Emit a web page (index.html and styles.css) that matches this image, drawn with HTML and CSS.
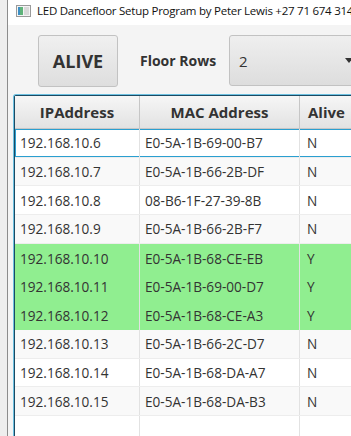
FILE: index.html
```html
<!DOCTYPE html>
<html lang="en">
<head>
    <meta charset="UTF-8">
    <meta name="viewport" content="width=device-width, initial-scale=1.0">
    <title>LED Dancefloor Setup Program</title>
    <link rel="stylesheet" href="styles.css">
</head>
<body>
    <div class="frame">
        <div class="titlebar">
            <svg class="app-icon" width="15" height="12" viewBox="0 0 15 12">
                <rect x="0.5" y="0.5" width="14" height="11" fill="#f4f4f4" stroke="#9a9a9a"/>
                <rect x="2" y="2" width="5" height="8" fill="#3c8fc4"/>
                <rect x="4" y="2" width="3" height="8" fill="#5fb37a"/>
                <rect x="8" y="2" width="5" height="8" fill="#d9d9d9"/>
            </svg>
            <span class="title">LED Dancefloor Setup Program by Peter Lewis +27 71 674 3147</span>
        </div>

        <div class="content">
            <div class="toolbar">
                <button class="btn-alive">ALIVE</button>
                <span class="label">Floor Rows</span>
                <div class="combo">
                    <span class="combo-value">2</span>
                    <span class="combo-arrow"></span>
                </div>
            </div>

            <div class="table">
                <div class="row head">
                    <div class="cell">IPAddress</div>
                    <div class="cell">MAC Address</div>
                    <div class="cell">Alive</div>
                </div>
                <div class="row focused">
                    <div class="cell">192.168.10.6</div>
                    <div class="cell">E0-5A-1B-69-00-B7</div>
                    <div class="cell">N</div>
                </div>
                <div class="row odd">
                    <div class="cell">192.168.10.7</div>
                    <div class="cell">E0-5A-1B-66-2B-DF</div>
                    <div class="cell">N</div>
                </div>
                <div class="row">
                    <div class="cell">192.168.10.8</div>
                    <div class="cell">08-B6-1F-27-39-8B</div>
                    <div class="cell">N</div>
                </div>
                <div class="row odd">
                    <div class="cell">192.168.10.9</div>
                    <div class="cell">E0-5A-1B-66-2B-F7</div>
                    <div class="cell">N</div>
                </div>
                <div class="row alive">
                    <div class="cell">192.168.10.10</div>
                    <div class="cell">E0-5A-1B-68-CE-EB</div>
                    <div class="cell">Y</div>
                </div>
                <div class="row alive">
                    <div class="cell">192.168.10.11</div>
                    <div class="cell">E0-5A-1B-69-00-D7</div>
                    <div class="cell">Y</div>
                </div>
                <div class="row alive">
                    <div class="cell">192.168.10.12</div>
                    <div class="cell">E0-5A-1B-68-CE-A3</div>
                    <div class="cell">Y</div>
                </div>
                <div class="row odd">
                    <div class="cell">192.168.10.13</div>
                    <div class="cell">E0-5A-1B-66-2C-D7</div>
                    <div class="cell">N</div>
                </div>
                <div class="row">
                    <div class="cell">192.168.10.14</div>
                    <div class="cell">E0-5A-1B-68-DA-A7</div>
                    <div class="cell">N</div>
                </div>
                <div class="row odd">
                    <div class="cell">192.168.10.15</div>
                    <div class="cell">E0-5A-1B-68-DA-B3</div>
                    <div class="cell">N</div>
                </div>
                <div class="row">
                    <div class="cell"></div>
                    <div class="cell"></div>
                    <div class="cell"></div>
                </div>
            </div>
        </div>
    </div>
</body>
</html>
```

FILE: styles.css
```css
html, body {
    margin: 0;
    padding: 0;
    overflow: hidden;
}
body {
    font-family: "Open Sans", "Noto Sans", sans-serif;
    background-color: #eeeeee;
    color: #333;
    width: 351px;
    height: 436px;
}
.frame {
    margin-left: 7px;
    border-left: 1px solid #8c8c8c;
    height: 436px;
    width: 420px;
}
.titlebar {
    height: 25px;
    background-color: white;
    display: flex;
    align-items: center;
    padding-left: 8px;
    box-sizing: border-box;
}
.app-icon {
    display: block;
    margin-top: -3px;
}
.title {
    font-size: 11.5px;
    color: #111;
    margin-left: 6px;
    margin-top: -4px;
    white-space: nowrap;
    letter-spacing: -0.25px;
}
.content {
    background-color: #f4f4f4;
    height: 411px;
    padding-top: 10px;
    box-sizing: border-box;
}
.toolbar {
    display: flex;
    align-items: flex-start;
    padding-left: 30px;
    height: 52px;
}
.btn-alive {
    width: 80px;
    height: 52px;
    font-family: inherit;
    font-size: 18px;
    font-weight: bold;
    color: #333;
    background: linear-gradient(#f0f0f0, #dedede);
    border: 1px solid #c2c2c2;
    border-radius: 3px;
    padding: 0;
}
.label {
    font-size: 14px;
    font-weight: bold;
    line-height: 52px;
    margin-left: 22px;
    width: 89px;
    white-space: nowrap;
}
.combo {
    width: 140px;
    height: 51px;
    box-sizing: border-box;
    background: linear-gradient(#efefef, #dddddd);
    border: 1px solid #c2c2c2;
    border-radius: 3px;
    display: flex;
    align-items: center;
    padding-left: 9px;
}
.combo-value {
    font-size: 15px;
}
.combo-arrow {
    margin-left: auto;
    margin-right: 15px;
    width: 0;
    height: 0;
    border-left: 4px solid transparent;
    border-right: 4px solid transparent;
    border-top: 5px solid #333;
}
.table {
    margin-top: 8px;
    margin-left: 6px;
    width: 400px;
    border: 1px solid #1c4a62;
    border-radius: 2px 0 0 0;
    box-shadow: 0 0 0 1px #6cc0e0;
    background-color: white;
}
.row {
    display: grid;
    grid-template-columns: 125px 160px 115px;
    height: 28.7px;
    box-sizing: border-box;
    background-color: white;
    border-bottom: 1px solid #ededed;
    font-size: 13.6px;
}
.row.odd {
    background-color: #f9f9f9;
}
.row.alive {
    background-color: #90ee90;
    border-bottom: none;
}
.row.focused {
    box-shadow: inset 0 0 0 1px #2a9fd0;
}
.cell {
    border-right: 1px solid #e2e2e2;
    padding-left: 5px;
    display: flex;
    align-items: center;
    white-space: nowrap;
}
.cell:last-child {
    padding-left: 7px;
}
.row.head {
    height: 33px;
    background: linear-gradient(#f6f6f6, #e2e2e2);
    border-bottom: 1px solid #c6c6c6;
    font-size: 15px;
    font-weight: bold;
}
.row.head .cell {
    justify-content: center;
    padding: 0;
    border-right: 1px solid #c6c6c6;
}
.row.head .cell:last-child {
    justify-content: flex-start;
    padding-left: 8px;
}
```
